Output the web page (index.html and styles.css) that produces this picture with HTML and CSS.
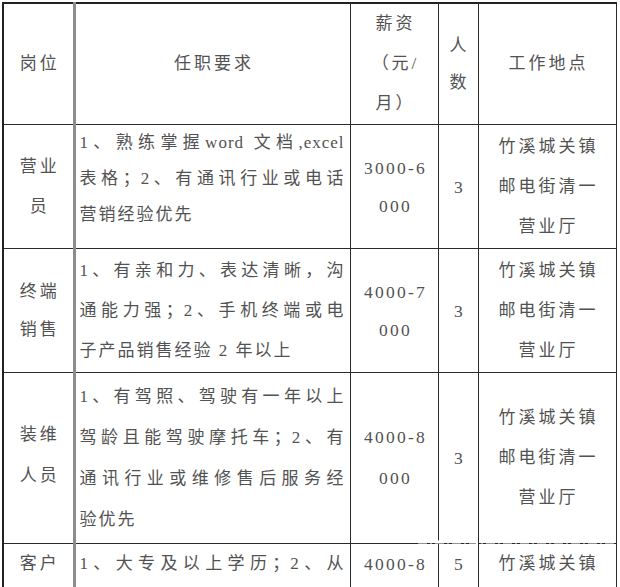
FILE: index.html
```html
<!DOCTYPE html>
<html lang="zh-CN">
<head>
<meta charset="utf-8">
<title>招聘岗位</title>
<link rel="stylesheet" href="styles.css">
</head>
<body>
<div class="page">
<table class="jobs">
  <colgroup>
    <col class="w1"><col class="w2"><col class="w3"><col class="w4"><col class="w5">
  </colgroup>
  <tr class="r-head">
    <td class="c1">岗位</td>
    <td class="cc">任职要求</td>
    <td class="cc"><span class="ln">薪资</span><span class="ln">（元/</span><span class="ln">月）</span></td>
    <td class="cc lh37"><span class="ln">人</span><span class="ln">数</span></td>
    <td class="cc">工作地点</td>
  </tr>
  <tr class="r1">
    <td class="c1"><span class="ln">营业</span><span class="ln">员</span></td>
    <td class="c2 lh36 top"><span class="ln j">1、熟练掌握word 文档,excel</span><span class="ln j">表格；2、有通讯行业或电话</span><span class="ln">营销经验优先</span></td>
    <td class="cc num lh38"><span class="ln">3000-6</span><span class="ln">000</span></td>
    <td class="cc num">3</td>
    <td class="cc"><span class="ln">竹溪城关镇</span><span class="ln">邮电街清一</span><span class="ln">营业厅</span></td>
  </tr>
  <tr class="r2">
    <td class="c1 lh38"><span class="ln">终端</span><span class="ln">销售</span></td>
    <td class="c2"><span class="ln j">1、有亲和力、表达清晰，沟</span><span class="ln j">通能力强；2、手机终端或电</span><span class="ln">子产品销售经验 2 年以上</span></td>
    <td class="cc num lh38"><span class="ln">4000-7</span><span class="ln">000</span></td>
    <td class="cc num">3</td>
    <td class="cc"><span class="ln">竹溪城关镇</span><span class="ln">邮电街清一</span><span class="ln">营业厅</span></td>
  </tr>
  <tr class="r3">
    <td class="c1 lh41 up4"><span class="ln">装维</span><span class="ln">人员</span></td>
    <td class="c2 lh41"><span class="ln j">1、有驾照、驾驶有一年以上</span><span class="ln j">驾龄且能驾驶摩托车；2、有</span><span class="ln j">通讯行业或维修售后服务经</span><span class="ln">验优先</span></td>
    <td class="cc num lh41"><span class="ln">4000-8</span><span class="ln">000</span></td>
    <td class="cc num">3</td>
    <td class="cc"><span class="ln">竹溪城关镇</span><span class="ln">邮电街清一</span><span class="ln">营业厅</span></td>
  </tr>
  <tr class="r4">
    <td class="c1 top"><span class="ln">客户</span></td>
    <td class="c2 top"><span class="ln j">1、大专及以上学历；2、从</span></td>
    <td class="cc num top"><span class="ln">4000-8</span></td>
    <td class="cc num top"><span class="ln">5</span></td>
    <td class="cc top"><span class="ln">竹溪城关镇</span></td>
  </tr>
</table>
<svg class="mark" width="620" height="587" viewBox="0 0 620 587" aria-hidden="true">
  <g stroke="#ffffff" fill="none">
    <line x1="418" y1="542" x2="620" y2="542" stroke-width="3" stroke-dasharray="9 3 2 3"/>
    <line x1="437" y1="520" x2="437" y2="560" stroke-width="2" stroke-dasharray="5 4"/>
    <line x1="477" y1="520" x2="477" y2="587" stroke-width="2" stroke-dasharray="3 4"/>
  </g>
</svg>
</div>
</body>
</html>
```

FILE: styles.css
```css
html, body {
  margin: 0;
  padding: 0;
  background: #ffffff;
}

body {
  font-family: "Liberation Serif", "Noto Sans CJK SC", serif;
  font-size: 17px;
  color: #525252;
}

.page {
  position: relative;
  width: 620px;
  height: 587px;
  overflow: hidden;
}

.jobs {
  border-collapse: collapse;
  table-layout: fixed;
  width: 614px;
  margin: 2px 0 0 2px;
  border-top: 2px solid #222;
  border-left: 2px solid #222;
  border-right: 1px solid #333;
}

.w1 { width: 71px; }
.w2 { width: 276px; }
.w3 { width: 88px; }
.w4 { width: 40px; }
.w5 { width: 138px; }

.jobs td {
  --lh: 40px;
  border: 1px solid #2a2a2a;
  padding: 0;
  vertical-align: middle;
  line-height: var(--lh);
  overflow: hidden;
}

.r-head td { height: 120px; }
.r1 td { height: 123px; }
.r2 td { height: 123px; }
.r3 td { height: 164px; }
.r4 td { height: 120px; }

.jobs td.c1 {
  border-right: 3px solid #8c8c8c;
  text-align: center;
  letter-spacing: 3px;
  padding-left: 3px;
}

.jobs td.c2 {
  text-align: left;
  letter-spacing: 2px;
  padding: 0 5px 0 4px;
}

.jobs td.cc {
  text-align: center;
  letter-spacing: 3px;
  padding-left: 3px;
}

.jobs td.num {
  letter-spacing: 2.2px;
  font-size: 17.5px;
}

.ln {
  display: block;
  height: var(--lh);
  overflow: visible;
  white-space: nowrap;
}

.ln.j {
  text-align: justify;
  text-align-last: justify;
  letter-spacing: 1px;
}

.jobs td.lh36 { --lh: 36px; }
.jobs td.lh37 { --lh: 37px; }
.jobs td.lh38 { --lh: 38px; }
.jobs td.lh41 { --lh: 41px; }

.jobs td.up4 { padding-bottom: 6px; }

.jobs td.top {
  vertical-align: top;
}

.mark {
  position: absolute;
  left: 0;
  top: 0;
  pointer-events: none;
}
```
